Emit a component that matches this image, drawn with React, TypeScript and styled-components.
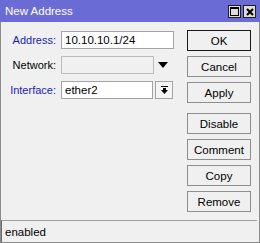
import React from "react";
import styled, { createGlobalStyle } from "styled-components";

const GlobalStyle = createGlobalStyle`
  html, body {
    margin: 0;
    padding: 0;
    background: #f0f0f0;
  }
  body {
    font-family: "Liberation Sans", Arial, sans-serif;
    font-size: 11px;
    color: #000;
  }
`;

const Window = styled.div`
  width: 260px;
  height: 243px;
  box-sizing: border-box;
  display: flex;
  flex-direction: column;
  background: #f0f0f0;
  border-left: 1px solid #8a8a8a;
  border-right: 1px solid #8a8a8a;
  border-bottom: 1px solid #8a8a8a;
`;

const TitleBar = styled.div`
  height: 22px;
  flex: none;
  display: flex;
  align-items: center;
  justify-content: space-between;
  background: #6b6bd6;
  color: #fff;
  padding: 0 4px 0 5px;
  margin: 0 -1px;
  font-size: 11.5px;
`;

const TitleButtons = styled.div`
  display: flex;
  gap: 2px;
  margin-top: 1px;
`;

const TitleButton = styled.div`
  width: 13px;
  height: 13px;
  box-sizing: border-box;
  border: 1px solid #1e1e1e;
  background: #dcdcdc;
  display: flex;
  align-items: center;
  justify-content: center;
`;

const Body = styled.div`
  flex: 1;
  display: flex;
  padding: 8px 8px 0 0;
`;

const Form = styled.div`
  width: 180px;
  display: flex;
  flex-direction: column;
  gap: 7px;
  padding-top: 1px;
`;

const Row = styled.div`
  display: flex;
  align-items: center;
  height: 18px;
`;

const Label = styled.label<{ $blue?: boolean }>`
  width: 55px;
  text-align: right;
  color: ${(p) => (p.$blue ? "#1c1cb4" : "#000")};
  margin-right: 5px;
`;

const Field = styled.div<{ $width: number; $disabled?: boolean }>`
  width: ${(p) => p.$width}px;
  height: 18px;
  box-sizing: border-box;
  border: 1px solid ${(p) => (p.$disabled ? "#bcbcbc" : "#a4a4a4")};
  background: ${(p) => (p.$disabled ? "#f0f0f0" : "#fff")};
  padding: 0 3px;
  display: flex;
  align-items: center;
  font-size: 11.5px;
`;

const Arrow = styled.div`
  width: 14px;
  height: 18px;
  margin-left: 2px;
  display: flex;
  align-items: center;
  justify-content: center;
`;

const DropButton = styled.div`
  width: 18px;
  height: 18px;
  margin-left: 2px;
  box-sizing: border-box;
  border: 1px solid #a4a4a4;
  background: #f4f4f4;
  display: flex;
  align-items: center;
  justify-content: center;
`;

const Buttons = styled.div`
  margin-left: auto;
  width: 64px;
  display: flex;
  flex-direction: column;
  gap: 5px;
`;

const Button = styled.button<{ $default?: boolean; $spaced?: boolean }>`
  height: 21px;
  width: 64px;
  box-sizing: border-box;
  border: 1px solid ${(p) => (p.$default ? "#1a1a1a" : "#8e8e8e")};
  border-radius: 0;
  background: #f0f0f0;
  font-family: "Liberation Sans", Arial, sans-serif;
  font-size: 11.5px;
  color: #000;
  padding: 0;
  margin-top: ${(p) => (p.$spaced ? "5px" : "0")};
`;

const StatusBar = styled.div`
  height: 22px;
  flex: none;
  box-sizing: border-box;
  margin: 0 2px 0 0;
  border-top: 1px solid #a0a0a0;
  border-left: 1px solid #6a6a6a;
  padding-left: 3px;
  display: flex;
  align-items: center;
  font-size: 11.5px;
`;

const App = () => {
  return (
    <>
      <GlobalStyle />
      <Window>
        <TitleBar>
          <span>New Address</span>
          <TitleButtons>
            <TitleButton>
              <svg width="9" height="9" viewBox="0 0 9 9">
                <rect x="0.5" y="0.5" width="8" height="8" fill="none" stroke="#000" />
                <rect x="0" y="0" width="9" height="2" fill="#000" />
              </svg>
            </TitleButton>
            <TitleButton>
              <svg width="8" height="8" viewBox="0 0 8 8">
                <path d="M1 1 L7 7 M7 1 L1 7" stroke="#000" strokeWidth="2" />
              </svg>
            </TitleButton>
          </TitleButtons>
        </TitleBar>
        <Body>
          <Form>
            <Row>
              <Label $blue>Address:</Label>
              <Field $width={113}>10.10.10.1/24</Field>
            </Row>
            <Row>
              <Label>Network:</Label>
              <Field $width={93} $disabled />
              <Arrow>
                <svg width="10" height="6" viewBox="0 0 10 6">
                  <polygon points="0,0 10,0 5,6" fill="#000" />
                </svg>
              </Arrow>
            </Row>
            <Row>
              <Label $blue>Interface:</Label>
              <Field $width={92}>ether2</Field>
              <DropButton>
                <svg width="7" height="8" viewBox="0 0 7 8">
                  <rect x="0" y="0" width="7" height="1" fill="#000" />
                  <rect x="2" y="2" width="3" height="2" fill="#000" />
                  <polygon points="0,4 7,4 3.5,8" fill="#000" />
                </svg>
              </DropButton>
            </Row>
          </Form>
          <Buttons>
            <Button $default>OK</Button>
            <Button>Cancel</Button>
            <Button>Apply</Button>
            <Button $spaced>Disable</Button>
            <Button>Comment</Button>
            <Button>Copy</Button>
            <Button>Remove</Button>
          </Buttons>
        </Body>
        <StatusBar>enabled</StatusBar>
      </Window>
    </>
  );
};

export default App;
